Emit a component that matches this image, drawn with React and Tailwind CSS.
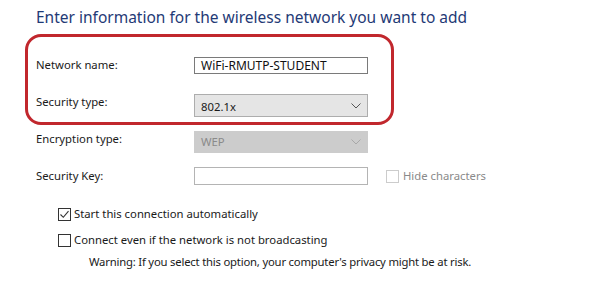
import React from 'react';

const font = { fontFamily: '"Noto Sans", "Open Sans", sans-serif' };

const Chevron = ({ color }) => (
  <svg width="10" height="6" viewBox="0 0 10 6" fill="none">
    <path d="M0.5 0.5 L5 5 L9.5 0.5" stroke={color} strokeWidth="1" />
  </svg>
);

const Checkbox = ({ checked, muted }) => (
  <div
    className={`w-[13px] h-[13px] border bg-white flex items-center justify-center shrink-0 ${
      muted ? 'border-[#cccccc]' : 'border-[#333333]'
    }`}
  >
    {checked && (
      <svg width="11" height="11" viewBox="0 0 11 11" fill="none">
        <path d="M1.5 5.5 L4.3 8.3 L9.5 2.2" stroke="#333" strokeWidth="1.1" />
      </svg>
    )}
  </div>
);

export default function App() {
  return (
    <div className="relative w-[608px] h-[300px] bg-white text-[11.3px] text-[#1a1a1a]" style={font}>
      <div className="pl-[36px] pt-[6px] h-[34px] text-[15.5px] leading-[22px] text-[#1f3a76]">
        Enter information for the wireless network you want to add
      </div>

      {/* form rows */}
      <div className="pl-[36px]">
        <div className="flex items-start mt-[23px]">
          <div className="w-[158px] leading-[16px]">Network name:</div>
          <div className="w-[174px] h-[17px] border border-[#7a7a7a] px-[6px] leading-[15px] text-[12px] text-[#111]">
            WiFi-RMUTP-STUDENT
          </div>
        </div>

        <div className="flex items-start mt-[20px]">
          <div className="w-[158px] leading-[16px]">Security type:</div>
          <div className="w-[174px] h-[23px] border border-[#adadad] bg-[#e5e5e5] pl-[6px] pr-[6px] flex items-center justify-between">
            <span className="pt-[3px]">802.1x</span>
            <Chevron color="#555" />
          </div>
        </div>

        <div className="flex items-start mt-[14px]">
          <div className="w-[158px] leading-[16px]">Encryption type:</div>
          <div className="w-[174px] h-[22px] border border-[#cccccc] bg-[#cccccc] pl-[6px] pr-[6px] flex items-center justify-between text-[#8a8a8a]">
            <span>WEP</span>
            <Chevron color="#a8a8a8" />
          </div>
        </div>

        <div className="flex items-center mt-[14px]">
          <div className="w-[158px] leading-[16px]">Security Key:</div>
          <div className="w-[174px] h-[18px] border border-[#b4b4b4] bg-white" />
          <div className="flex items-center ml-[18px] gap-[4px] text-[#8a8a8a]">
            <Checkbox muted />
            <span>Hide characters</span>
          </div>
        </div>
      </div>

      {/* options */}
      <div className="pl-[58px] mt-[22px] flex flex-col">
        <div className="flex items-center gap-[3px] h-[14px]">
          <Checkbox checked />
          <span>Start this connection automatically</span>
        </div>
        <div className="flex items-center gap-[3px] h-[14px] mt-[12px]">
          <Checkbox />
          <span>Connect even if the network is not broadcasting</span>
        </div>
        <div className="pl-[31px] mt-[7px] leading-[16px] tracking-[-0.2px]">
          Warning: If you select this option, your computer's privacy might be at risk.
        </div>
      </div>

      {/* red annotation around the first two fields */}
      <div className="absolute left-[25px] top-[34px] w-[369px] h-[91px] border-[3px] border-[#c1272d] rounded-[16px] pointer-events-none" />
    </div>
  );
}
